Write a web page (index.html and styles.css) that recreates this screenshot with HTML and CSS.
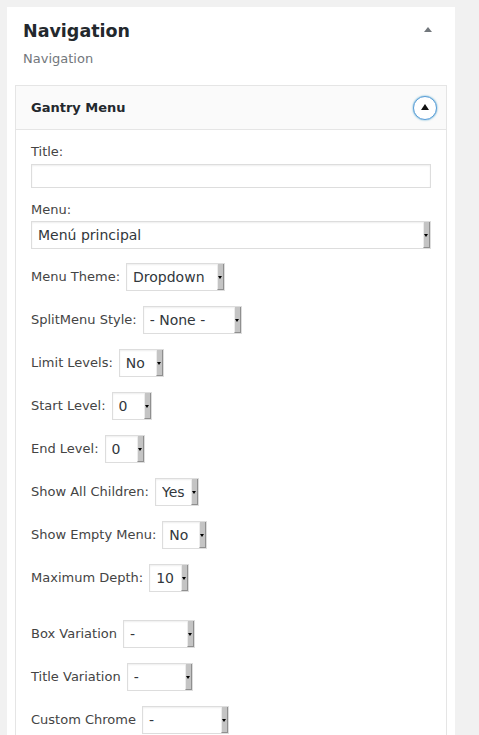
FILE: index.html
```html
<!DOCTYPE html>
<html>
<head>
<meta charset="utf-8">
<link rel="stylesheet" href="styles.css">
</head>
<body>
<div class="panel">
  <div class="panel-head">
    <h2 class="panel-title">Navigation</h2>
    <span class="collapse-arrow"></span>
  </div>
  <div class="panel-desc">Navigation</div>

  <div class="widget">
    <div class="widget-top">
      <span class="widget-title">Gantry Menu</span>
      <button class="toggle" type="button"><span class="toggle-tri"></span></button>
    </div>
    <div class="widget-inside">
      <div class="field block">
        <label class="lbl">Title:</label>
        <input class="text-input" type="text">
      </div>
      <div class="field block">
        <label class="lbl">Menu:</label>
        <span class="sel full"><select><option>Menú principal</option></select><span class="arr"></span></span>
      </div>
      <div class="field row">
        <label class="lbl">Menu Theme:</label>
        <span class="sel w99"><select><option>Dropdown</option></select><span class="arr"></span></span>
      </div>
      <div class="field row">
        <label class="lbl">SplitMenu Style:</label>
        <span class="sel w99"><select><option>- None -</option></select><span class="arr"></span></span>
      </div>
      <div class="field row">
        <label class="lbl">Limit Levels:</label>
        <span class="sel w45"><select><option>No</option></select><span class="arr"></span></span>
      </div>
      <div class="field row">
        <label class="lbl">Start Level:</label>
        <span class="sel w40"><select><option>0</option></select><span class="arr"></span></span>
      </div>
      <div class="field row">
        <label class="lbl">End Level:</label>
        <span class="sel w40"><select><option>0</option></select><span class="arr"></span></span>
      </div>
      <div class="field row">
        <label class="lbl">Show All Children:</label>
        <span class="sel w44"><select><option>Yes</option></select><span class="arr"></span></span>
      </div>
      <div class="field row">
        <label class="lbl">Show Empty Menu:</label>
        <span class="sel w45"><select><option>No</option></select><span class="arr"></span></span>
      </div>
      <div class="field row">
        <label class="lbl">Maximum Depth:</label>
        <span class="sel w40"><select><option>10</option></select><span class="arr"></span></span>
      </div>
      <div class="field row spaced">
        <label class="lbl">Box Variation</label>
        <span class="sel w72"><select><option>-</option></select><span class="arr"></span></span>
      </div>
      <div class="field row">
        <label class="lbl">Title Variation</label>
        <span class="sel w66"><select><option>-</option></select><span class="arr"></span></span>
      </div>
      <div class="field row">
        <label class="lbl">Custom Chrome</label>
        <span class="sel w87"><select><option>-</option></select><span class="arr"></span></span>
      </div>
    </div>
  </div>
</div>
</body>
</html>
```

FILE: styles.css
```css
html, body {
  margin: 0;
  padding: 0;
  background: #f1f1f1;
  font-family: "DejaVu Sans", Verdana, sans-serif;
}

.panel {
  margin: 7px 0 0 7px;
  width: 448px;
  box-sizing: border-box;
  background: #fff;
  padding: 13px 8px 40px 8px;
}

.panel-head {
  display: flex;
  align-items: center;
  justify-content: space-between;
  padding: 0 15px 0 8px;
}

.panel-title {
  margin: 0;
  font-size: 17.5px;
  line-height: 22px;
  font-weight: bold;
  color: #23282d;
}

.collapse-arrow {
  width: 0;
  height: 0;
  border-left: 4px solid transparent;
  border-right: 4px solid transparent;
  border-bottom: 5px solid #72777c;
  margin-top: -3px;
}

.panel-desc {
  margin: 9px 0 0 8px;
  font-size: 13px;
  line-height: 16px;
  color: #72777c;
}

.widget {
  margin-top: 18px;
  border: 1px solid #e5e5e5;
  background: #fff;
}

.widget-top {
  height: 43px;
  display: flex;
  align-items: center;
  justify-content: space-between;
  padding: 0 9px 0 15px;
  background: #fafafa;
  border-bottom: 1px solid #e5e5e5;
}

.widget-title {
  font-size: 13px;
  font-weight: bold;
  color: #23282d;
}

.toggle {
  width: 24px;
  height: 24px;
  border-radius: 50%;
  border: 1px solid #5b9dd9;
  box-shadow: 0 0 2px rgba(30, 140, 190, 0.8);
  background: #fff;
  padding: 0;
  display: flex;
  align-items: center;
  justify-content: center;
}

.toggle-tri {
  width: 0;
  height: 0;
  border-left: 4px solid transparent;
  border-right: 4px solid transparent;
  border-bottom: 6px solid #111;
  margin-top: -1px;
}

.widget-inside {
  padding: 14px 15px 20px 15px;
}

.field {
  margin-bottom: 15px;
}

.field.block {
  display: flex;
  flex-direction: column;
  margin-bottom: 14px;
}

.field.block .lbl {
  margin-bottom: 4px;
}

.field.block .sel {
  margin-top: -1px;
}

.field.row {
  display: flex;
  align-items: center;
  gap: 6px;
}

.field.spaced {
  margin-top: 28px;
}

.lbl {
  font-size: 13px;
  line-height: 16px;
  color: #444;
}

.text-input {
  box-sizing: border-box;
  width: 400px;
  height: 24px;
  margin: 0;
  border: 1px solid #ddd;
  box-shadow: inset 0 1px 2px rgba(0, 0, 0, 0.07);
  background: #fff;
  padding: 0 5px;
}

.sel {
  position: relative;
  display: inline-block;
  height: 28px;
}

.sel select {
  -webkit-appearance: none;
  appearance: none;
  box-sizing: border-box;
  width: 100%;
  height: 28px;
  margin: 0;
  border: 1px solid #ddd;
  border-radius: 0;
  box-shadow: inset 0 1px 2px rgba(0, 0, 0, 0.07);
  background: #fff;
  padding: 0 10px 0 6px;
  font-family: "DejaVu Sans", Verdana, sans-serif;
  font-size: 14px;
  color: #32373c;
}

.sel .arr {
  position: absolute;
  top: 1px;
  bottom: 1px;
  right: 1px;
  width: 7px;
  box-sizing: border-box;
  background: #c4c4c4;
  border-left: 1px solid #ececec;
  border-right: 1px solid #8f8f8f;
  border-bottom: 1px solid #8f8f8f;
  pointer-events: none;
}

.sel .arr::after {
  content: "";
  position: absolute;
  left: 0;
  top: 50%;
  margin-top: -1px;
  width: 0;
  height: 0;
  border-left: 2.5px solid transparent;
  border-right: 2.5px solid transparent;
  border-top: 3px solid #000;
}

.full { width: 400px; }
.w99 { width: 99px; }
.w45 { width: 45px; }
.w44 { width: 44px; }
.w40 { width: 40px; }
.w72 { width: 72px; }
.w66 { width: 66px; }
.w87 { width: 87px; }
```
